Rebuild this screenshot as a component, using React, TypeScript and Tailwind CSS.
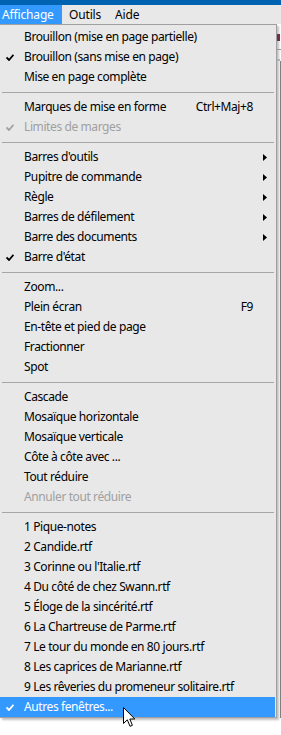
import React from 'react';

type Item =
  | { kind: 'sep' }
  | {
      kind: 'item';
      label: string;
      checked?: boolean;
      disabled?: boolean;
      shortcut?: string;
      submenu?: boolean;
      active?: boolean;
    };

const items: Item[] = [
  { kind: 'item', label: 'Brouillon (mise en page partielle)' },
  { kind: 'item', label: 'Brouillon (sans mise en page)', checked: true },
  { kind: 'item', label: 'Mise en page complète' },
  { kind: 'sep' },
  { kind: 'item', label: 'Marques de mise en forme', shortcut: 'Ctrl+Maj+8' },
  { kind: 'item', label: 'Limites de marges', checked: true, disabled: true },
  { kind: 'sep' },
  { kind: 'item', label: "Barres d'outils", submenu: true },
  { kind: 'item', label: 'Pupitre de commande', submenu: true },
  { kind: 'item', label: 'Règle', submenu: true },
  { kind: 'item', label: 'Barres de défilement', submenu: true },
  { kind: 'item', label: 'Barre des documents', submenu: true },
  { kind: 'item', label: "Barre d'état", checked: true },
  { kind: 'sep' },
  { kind: 'item', label: 'Zoom...' },
  { kind: 'item', label: 'Plein écran', shortcut: 'F9' },
  { kind: 'item', label: 'En-tête et pied de page' },
  { kind: 'item', label: 'Fractionner' },
  { kind: 'item', label: 'Spot' },
  { kind: 'sep' },
  { kind: 'item', label: 'Cascade' },
  { kind: 'item', label: 'Mosaïque horizontale' },
  { kind: 'item', label: 'Mosaïque verticale' },
  { kind: 'item', label: 'Côte à côte avec ...' },
  { kind: 'item', label: 'Tout réduire' },
  { kind: 'item', label: 'Annuler tout réduire', disabled: true },
  { kind: 'sep' },
  { kind: 'item', label: '1 Pique-notes' },
  { kind: 'item', label: '2 Candide.rtf' },
  { kind: 'item', label: "3 Corinne ou l'Italie.rtf" },
  { kind: 'item', label: '4 Du côté de chez Swann.rtf' },
  { kind: 'item', label: '5 Éloge de la sincérité.rtf' },
  { kind: 'item', label: '6 La Chartreuse de Parme.rtf' },
  { kind: 'item', label: '7 Le tour du monde en 80 jours.rtf' },
  { kind: 'item', label: '8 Les caprices de Marianne.rtf' },
  { kind: 'item', label: '9 Les rêveries du promeneur solitaire.rtf' },
  { kind: 'item', label: 'Autres fenêtres...', checked: true, active: true },
];

const Check = ({ color }: { color: string }) => (
  <svg width="8" height="7" viewBox="0 0 8 7">
    <path d="M0.5 3.5 L3 6 L7.5 0.8" fill="none" stroke={color} strokeWidth="1.8" />
  </svg>
);

const Arrow = () => (
  <svg width="4" height="7" viewBox="0 0 4 7">
    <polygon points="0,0 4,3.5 0,7" fill="#000" />
  </svg>
);

const Cursor = () => (
  <svg width="13" height="21" viewBox="0 0 13 21" className="absolute left-[123px] top-[707px]">
    <path
      d="M0.5 0.5 L0.5 16.5 L4.3 12.8 L7 19.3 L9.4 18.3 L6.8 12 L11.8 12 Z"
      fill="#fff"
      stroke="#000"
      strokeWidth="1"
      strokeLinejoin="miter"
    />
  </svg>
);

const MenuRow = ({ item }: { item: Extract<Item, { kind: 'item' }> }) => {
  const textColor = item.active ? 'text-white' : item.disabled ? 'text-[#a0a0a0]' : 'text-black';
  return (
    <div className={`flex h-[20px] items-center mr-[1px] ${item.active ? 'bg-[#3399ff]' : ''} ${textColor}`}>
      <div className="flex w-[24px] justify-center pr-[4px]">
        {item.checked && <Check color={item.active ? '#fff' : item.disabled ? '#a0a0a0' : '#000'} />}
      </div>
      <span className="flex-1 whitespace-nowrap">{item.label}</span>
      {item.shortcut && <span className="whitespace-nowrap">{item.shortcut}</span>}
      <div className="flex w-[22px] pl-[10px]">{item.submenu && <Arrow />}</div>
    </div>
  );
};

export default function App() {
  return (
    <div className="relative h-[735px] w-[281px] overflow-hidden bg-white text-[12px] font-['Noto_Sans',sans-serif] leading-none tracking-[-0.4px]">
      <div className="h-[5px] bg-[#0063b1]" />
      <div className="flex h-[19px] items-stretch bg-[#e8e8e8] text-black tracking-[-0.15px]">
        <div className="flex w-[62px] items-center bg-[#3399ff] pl-[2px] text-white">Affichage</div>
        <div className="flex w-[46px] items-center pl-[7px]">Outils</div>
        <div className="flex items-center pl-[7px]">Aide</div>
      </div>
      <div className="flex">
        <div className="w-[277px] border-r border-b border-t border-[#a0a0a0] bg-[#e8e8e8] pt-[2px] shadow-[2px_2px_2px_rgba(0,0,0,0.25)]">
          {items.map((item, i) =>
            item.kind === 'sep' ? (
              <div key={i} className="flex h-[10px] items-center px-[2px]">
                <div className="h-px w-full bg-[#a6a6a6]" />
              </div>
            ) : (
              <MenuRow key={i} item={item} />
            )
          )}
        </div>
        <div className="flex w-[4px] flex-col">
          <div className="h-[10px]" />
          <div className="h-[7px] w-[3px] bg-[#7a2a4a]" />
          <div className="mt-[8px] h-px bg-[#9a9a9a]" />
          <div className="mt-[9px] h-[2px] w-[3px] bg-[#b0b0c0]" />
          <div className="flex-1 border-r border-[#808080]" />
        </div>
      </div>
      <Cursor />
    </div>
  );
}
